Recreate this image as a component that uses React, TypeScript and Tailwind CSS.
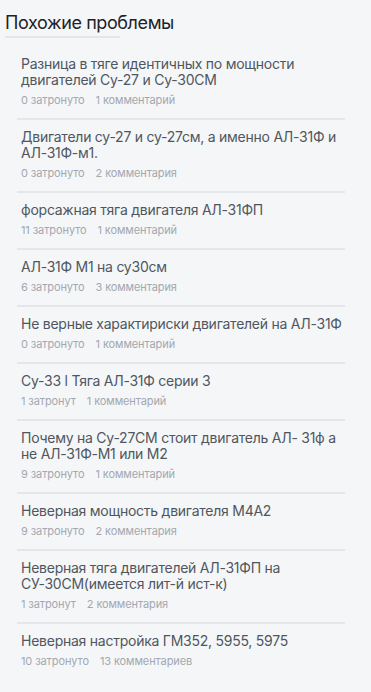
const issues = [
  { title: "Разница в тяге идентичных по мощности двигателей Су-27 и Су-30СМ", touched: "0 затронуто", comments: "1 комментарий" },
  { title: "Двигатели су-27 и су-27см, а именно АЛ-31Ф и АЛ-31Ф-м1.", touched: "0 затронуто", comments: "2 комментария" },
  { title: "форсажная тяга двигателя АЛ-31ФП", touched: "11 затронуто", comments: "1 комментарий" },
  { title: "АЛ-31Ф М1 на су30см", touched: "6 затронуто", comments: "3 комментария" },
  { title: "Не верные характириски двигателей на АЛ-31Ф", touched: "0 затронуто", comments: "1 комментарий" },
  { title: "Су-33 l Тяга АЛ-31Ф серии 3", touched: "1 затронут", comments: "1 комментарий" },
  { title: "Почему на Су-27СМ стоит двигатель АЛ- 31ф а не АЛ-31Ф-М1 или М2", touched: "9 затронуто", comments: "1 комментарий" },
  { title: "Неверная мощность двигателя М4А2", touched: "9 затронуто", comments: "2 комментария" },
  { title: "Неверная тяга двигателей АЛ-31ФП на СУ-30СМ(имеется лит-й ист-к)", touched: "1 затронут", comments: "2 комментария" },
  { title: "Неверная настройка ГМ352, 5955, 5975", touched: "10 затронуто", comments: "13 комментариев" },
];

export default function App() {
  return (
    <div className="min-h-[692px] w-[371px] bg-[#f5f6f8] font-['Inter','Noto_Sans',sans-serif]">
      <div className="pl-[5px] pt-[11px]">
        <h2 className="text-[18px] leading-[24px] font-normal text-[#1e2227] tracking-[-0.4px]">Похожие проблемы</h2>
        <div className="mt-[1px] h-[2px] w-[115px] bg-[#e4e6ea]" />
      </div>
      <ul className="ml-[17px] mt-[9px] w-[328px]">
        {issues.map((it, i) => (
          <li
            key={i}
            className={
              i < issues.length - 1
                ? "border-b-2 border-[#e4e6ea] pl-[4px] pr-[2px] pt-[9px] pb-[11px]"
                : "pl-[4px] pr-[2px] pt-[9px] pb-[11px]"
            }
          >
            <a className="block text-[14px] leading-[16px] text-[#4f5660] tracking-[-0.25px]">{it.title}</a>
            <div className="mt-[5px] flex gap-[11px] text-[11px] leading-[14px] text-[#a2a8b0] tracking-[-0.1px]">
              <span>{it.touched}</span>
              <span>{it.comments}</span>
            </div>
          </li>
        ))}
      </ul>
    </div>
  );
}
